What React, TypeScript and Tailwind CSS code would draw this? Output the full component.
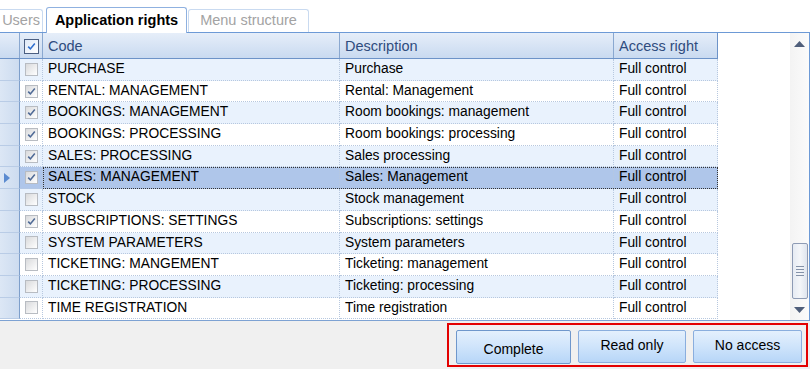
import React from 'react';

type Row = { code: string; desc: string; checked: boolean };

const rows: Row[] = [
  { code: 'PURCHASE', desc: 'Purchase', checked: false },
  { code: 'RENTAL: MANAGEMENT', desc: 'Rental: Management', checked: true },
  { code: 'BOOKINGS: MANAGEMENT', desc: 'Room bookings: management', checked: true },
  { code: 'BOOKINGS: PROCESSING', desc: 'Room bookings: processing', checked: true },
  { code: 'SALES: PROCESSING', desc: 'Sales processing', checked: true },
  { code: 'SALES: MANAGEMENT', desc: 'Sales: Management', checked: true },
  { code: 'STOCK', desc: 'Stock management', checked: false },
  { code: 'SUBSCRIPTIONS: SETTINGS', desc: 'Subscriptions: settings', checked: true },
  { code: 'SYSTEM PARAMETERS', desc: 'System parameters', checked: false },
  { code: 'TICKETING: MANGEMENT', desc: 'Ticketing: management', checked: false },
  { code: 'TICKETING: PROCESSING', desc: 'Ticketing: processing', checked: false },
  { code: 'TIME REGISTRATION', desc: 'Time registration', checked: false },
];

const SELECTED = 5;

function Check({ checked, header }: { checked: boolean; header?: boolean }) {
  return (
    <div
      className={
        header
          ? 'w-[15px] h-[15px] border border-[#4b5f82] bg-gradient-to-br from-[#dfe9f7] to-[#ffffff] flex items-center justify-center'
          : 'w-[13px] h-[13px] border border-[#b8bcc2] bg-gradient-to-br from-[#d9dadc] to-[#ffffff] flex items-center justify-center'
      }
    >
      {checked && (
        <svg width="9" height="9" viewBox="0 0 9 9">
          <path
            d="M1.2 4.6 L3.4 6.9 L7.8 1.6"
            fill="none"
            stroke={header ? '#2f6fcf' : '#4f6a96'}
            strokeWidth="1.6"
          />
        </svg>
      )}
    </div>
  );
}

function Button({ label, primary }: { label: string; primary?: boolean }) {
  return (
    <div
      className={
        'flex items-center justify-center border rounded-[2px] bg-gradient-to-b from-[#e4f0fd] via-[#cfe4fb] to-[#b7d6f8] text-[14px] text-black ' +
        (primary ? 'w-[115px] h-[34px] border-[#6f97cc] pt-[4px]' : 'h-[33px] border-[#8aaede] pb-[2px]')
      }
    >
      {label}
    </div>
  );
}

export default function App() {
  return (
    <div
      className="w-[810px] h-[369px] overflow-hidden bg-[#f0f0f0] flex flex-col"
      style={{ fontFamily: '"Liberation Sans", Arial, sans-serif' }}
    >
      {/* tabs */}
      <div className="h-[32px] bg-white flex items-end shrink-0">
        <div className="w-[43px] h-[23px] border border-b-0 border-l-0 border-[#c9daf0] rounded-tr-[3px] flex items-center justify-end pr-[2px] text-[14.5px] text-[#a3a3a3]">
          Users
        </div>
        <div className="ml-[3px] w-[141px] h-[26px] border border-b-0 border-[#8fb1e0] rounded-t-[3px] bg-white flex items-center justify-center font-bold text-[14.5px] text-black relative top-[1px]">
          Application rights
        </div>
        <div className="ml-[1px] w-[121px] h-[23px] border border-b-0 border-[#c9daf0] rounded-t-[3px] flex items-center justify-center text-[14.5px] text-[#a3a3a3]">
          Menu structure
        </div>
      </div>

      {/* grid */}
      <div className="h-[289px] shrink-0 border-t border-b border-r border-[#6d9ad6] border-b-[#7da2d3] flex bg-white">
        <div className="flex-1 flex flex-col">
          {/* header */}
          <div className="h-[26px] flex border-b border-[#6d93c8] bg-gradient-to-b from-[#e6eef9] to-[#c9daf0] text-[14.5px] text-[#2f4c7e] w-[718px]">
            <div className="w-[20px] border-r border-[#8aa8d0]" />
            <div className="w-[23px] flex items-center justify-center border-r border-[#8aa8d0] pt-[2px]">
              <Check checked header />
            </div>
            <div className="w-[297px] flex items-center pl-[5px] pt-[3px] border-r border-[#8aa8d0]">Code</div>
            <div className="w-[274px] flex items-center pl-[5px] pt-[3px] border-r border-[#8aa8d0]">Description</div>
            <div className="flex-1 flex items-center pl-[5px] pt-[3px] border-r border-[#6d93c8]">Access right</div>
          </div>
          {/* rows */}
          {rows.map((r, i) => {
            const sel = i === SELECTED;
            const bg = sel ? 'bg-[#afc6ea]' : i % 2 === 0 ? 'bg-[#e9f2fd]' : 'bg-white';
            return (
              <div key={r.code} className="h-[21.7px] flex w-[718px] text-[13.8px] text-black">
                <div className="w-[20px] bg-gradient-to-r from-[#dce7f5] to-[#cddcf0] border-r border-[#7e9fcb] border-b border-b-[#b9cce6] flex items-center pl-[4px]">
                  {sel && (
                    <svg width="7" height="10" viewBox="0 0 7 10">
                      <path d="M0 0 L6 5 L0 10 Z" fill="#5b8bd0" />
                    </svg>
                  )}
                </div>
                <div className={`w-[23px] flex items-center justify-center border-r border-b border-dotted border-[#b7c8df] ${bg}`}>
                  <Check checked={r.checked} />
                </div>
                <div
                  className={`flex-1 flex ${bg} ${
                    sel ? 'outline outline-1 outline-dotted outline-[#333] -outline-offset-1' : ''
                  }`}
                >
                  <div className="w-[297px] flex items-center pl-[5px] border-r border-b border-dotted border-[#b7c8df] whitespace-nowrap">
                    {r.code}
                  </div>
                  <div className="w-[274px] flex items-center pl-[5px] border-r border-b border-dotted border-[#b7c8df] whitespace-nowrap">
                    {r.desc}
                  </div>
                  <div className="flex-1 flex items-center pl-[5px] border-r border-b border-dotted border-[#b7c8df] whitespace-nowrap">
                    Full control
                  </div>
                </div>
              </div>
            );
          })}
        </div>

        {/* scrollbar */}
        <div className="w-[19px] bg-gradient-to-r from-[#f3f3f3] to-[#fbfbfb] flex flex-col items-center">
          <div className="h-[22px] flex items-center justify-center">
            <svg width="11" height="6" viewBox="0 0 11 6">
              <path d="M0 6 L5.5 0 L11 6 Z" fill="#4f5e7a" />
            </svg>
          </div>
          <div className="flex-1" />
          <div className="w-[16px] h-[56px] rounded-[2px] border border-[#8e9bb4] bg-gradient-to-r from-[#e6ebf3] via-[#f4f6f9] to-[#dfe5ee] flex flex-col items-center justify-center gap-[2px]">
            <div className="w-[8px] h-[1px] bg-[#8391a8]" />
            <div className="w-[8px] h-[1px] bg-[#8391a8]" />
            <div className="w-[8px] h-[1px] bg-[#8391a8]" />
            <div className="w-[8px] h-[1px] bg-[#8391a8]" />
          </div>
          <div className="h-[21px] flex items-center justify-center">
            <svg width="11" height="6" viewBox="0 0 11 6">
              <path d="M0 0 L11 0 L5.5 6 Z" fill="#4f5e7a" />
            </svg>
          </div>
        </div>
      </div>

      {/* buttons */}
      <div className="flex justify-end pt-[2px] pr-[2px]">
        <div className="w-[361px] h-[44px] border-2 border-[#e30000] flex items-start pt-[5px] pl-[7px] gap-[7px]">
          <Button label="Complete" primary />
          <div className="w-[108px]">
            <Button label="Read only" />
          </div>
          <div className="w-[109px]">
            <Button label="No access" />
          </div>
        </div>
      </div>
    </div>
  );
}
